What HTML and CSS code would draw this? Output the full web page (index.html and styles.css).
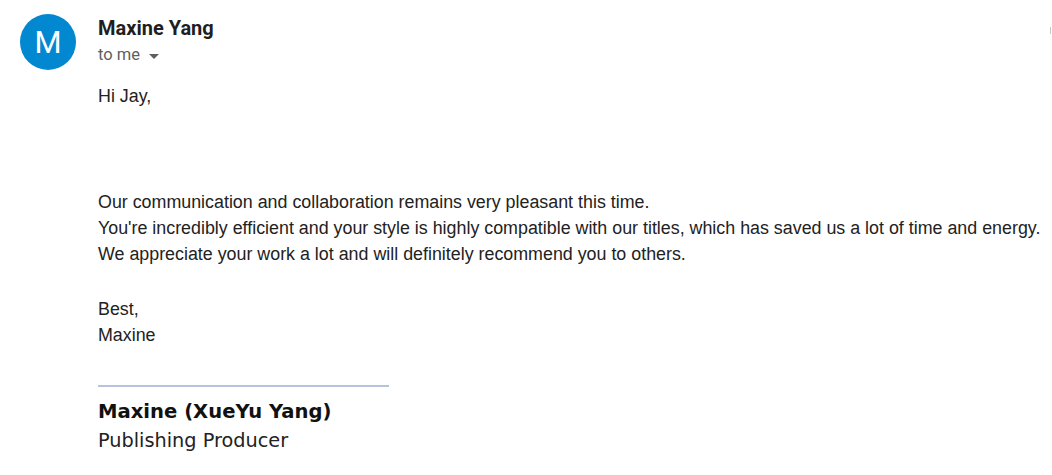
FILE: index.html
```html
<!DOCTYPE html>
<html>
<head>
<meta charset="utf-8">
<link rel="stylesheet" href="styles.css">
</head>
<body>
<div class="mail">
  <div class="avatar">M</div>
  <div class="main">
    <div class="head">
      <div class="sender">Maxine Yang</div>
      <div class="to">to me <span class="caret"></span></div>
    </div>
    <div class="body">
      <div class="line">Hi Jay,</div>
      <div class="line blank"></div>
      <div class="line blank"></div>
      <div class="line blank extra"></div>
      <div class="line">Our communication and collaboration remains very pleasant this time.</div>
      <div class="line">You're incredibly efficient and your style is highly compatible with our titles, which has saved us a lot of time and energy.</div>
      <div class="line">We appreciate your work a lot and will definitely recommend you to others.</div>
      <div class="line blank tall"></div>
      <div class="line">Best,</div>
      <div class="line">Maxine</div>
    </div>
    <div class="sig">
      <div class="sig-rule"></div>
      <div class="sig-name">Maxine (XueYu Yang)</div>
      <div class="sig-title">Publishing Producer</div>
    </div>
  </div>
  <div class="edge"></div>
</div>
</body>
</html>
```
FILE: styles.css
```css
html, body {
  margin: 0;
  padding: 0;
  background: #fff;
}
body {
  width: 1052px;
  height: 475px;
  overflow: hidden;
}
.mail {
  display: flex;
  align-items: flex-start;
  padding: 14px 0 0 20px;
  position: relative;
  height: 475px;
  box-sizing: border-box;
}
.avatar {
  width: 56px;
  height: 56px;
  border-radius: 50%;
  background: #0288d1;
  color: #fff;
  font-family: Roboto, "Liberation Sans", sans-serif;
  font-size: 31px;
  display: flex;
  align-items: center;
  justify-content: center;
  flex: none;
}
.main {
  margin-left: 22px;
  flex: 1;
}
.head {
  display: flex;
  flex-direction: column;
}
.sender {
  font-family: Roboto, "Liberation Sans", sans-serif;
  font-weight: 700;
  font-size: 20px;
  color: #1f1f1f;
  line-height: 24px;
  margin-top: 2px;
}
.to {
  font-family: Roboto, "Liberation Sans", sans-serif;
  font-size: 16.5px;
  color: #5e5e5e;
  line-height: 20px;
  margin-top: 5px;
  display: flex;
  align-items: center;
  gap: 9px;
}
.caret {
  width: 0;
  height: 0;
  border-left: 5px solid transparent;
  border-right: 5px solid transparent;
  border-top: 5px solid #5e5e5e;
  margin-top: 2px;
}
.body {
  margin-top: 18px;
  font-family: "Liberation Sans", Arial, sans-serif;
  font-size: 17.85px;
  color: #222;
}
.line {
  line-height: 26px;
  white-space: nowrap;
}
.blank {
  height: 26px;
}
.blank.extra {
  height: 28px;
}
.blank.tall {
  height: 29px;
}
.sig {
  margin-top: 37px;
}
.sig-rule {
  width: 291px;
  height: 2px;
  background: #b7c3de;
}
.sig-name {
  margin-top: 14px;
  font-family: "DejaVu Sans", Verdana, sans-serif;
  font-weight: 700;
  font-size: 19.6px;
  color: #111;
  line-height: 22px;
}
.sig-title {
  margin-top: 7px;
  font-family: "DejaVu Sans", Verdana, sans-serif;
  font-size: 19.3px;
  color: #222;
  line-height: 22px;
}
.edge {
  position: absolute;
  right: 1px;
  top: 27px;
  width: 1px;
  height: 7px;
  background: #c8c8c8;
}
```
